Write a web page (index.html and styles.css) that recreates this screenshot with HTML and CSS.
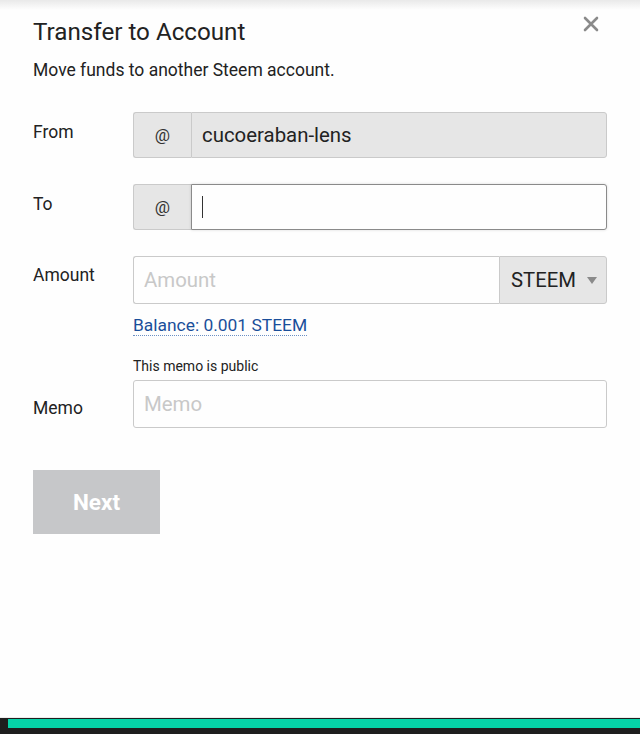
FILE: index.html
```html
<!DOCTYPE html>
<html>
<head>
<meta charset="utf-8">
<link rel="stylesheet" href="styles.css">
</head>
<body>
<div class="page">
  <div class="top-shade"></div>
  <div class="modal">
    <div class="header">
      <h1 class="title">Transfer to Account</h1>
      <button class="close" aria-label="Close">
        <svg width="16" height="16" viewBox="0 0 16 16"><path d="M2 2 L14 14 M14 2 L2 14" stroke="#8a8a8a" stroke-width="2.6" stroke-linecap="round"/></svg>
      </button>
    </div>
    <p class="subtitle">Move funds to another Steem account.</p>

    <div class="form">
      <div class="label">From</div>
      <div class="field">
        <div class="group">
          <span class="addon">@</span>
          <span class="input disabled">cucoeraban-lens</span>
        </div>
      </div>

      <div class="label">To</div>
      <div class="field">
        <div class="group">
          <span class="addon">@</span>
          <span class="input focused"><span class="caret"></span></span>
        </div>
      </div>

      <div class="label label-amount">Amount</div>
      <div class="field">
        <div class="group tall">
          <span class="input placeholder left">Amount</span>
          <span class="select">STEEM <span class="arrow"></span></span>
        </div>
        <a class="balance">Balance: 0.001 STEEM</a>
      </div>

      <div class="label label-memo">Memo</div>
      <div class="field">
        <div class="hint">This memo is public</div>
        <div class="group tall">
          <span class="input placeholder solo">Memo</span>
        </div>
      </div>
    </div>

    <button class="next">Next</button>
  </div>
  <div class="footer">
    <div class="footer-bar"></div>
  </div>
</div>
</body>
</html>
```

FILE: styles.css
```css
* { box-sizing: border-box; }
html, body { margin: 0; padding: 0; }
body {
  background: #fefefe;
  font-family: Roboto, "Liberation Sans", sans-serif;
  color: #222;
}
.page {
  position: relative;
  min-height: 734px;
  display: flex;
  flex-direction: column;
}
.top-shade {
  position: absolute;
  left: 0; right: 0; top: 0;
  height: 10px;
  background: linear-gradient(#e9e9e9, rgba(254,254,254,0));
}
.modal {
  padding: 18px 33px 0 33px;
  flex: 1;
}
.header {
  display: flex;
  justify-content: space-between;
  align-items: flex-start;
}
.title {
  margin: 0;
  font-size: 24.2px;
  line-height: 28px;
  font-weight: 400;
  color: #222;
}
.close {
  border: 0;
  background: none;
  padding: 0;
  margin: -2px 8px 0 0;
  width: 16px;
  height: 16px;
  display: flex;
}
.subtitle {
  margin: 14px 0 0 0;
  font-size: 17.5px;
  line-height: 20px;
  color: #222;
}
.form {
  margin-top: 32px;
  display: grid;
  grid-template-columns: 100px 1fr;
  row-gap: 26px;
}
.label {
  font-size: 17.5px;
  line-height: 20px;
  padding-top: 10px;
  color: #222;
}
.label-amount { padding-top: 9px; }
.label-memo { padding-top: 36px; }
.group {
  display: flex;
  height: 46px;
}
.group.tall { height: 48px; }
.addon {
  width: 58px;
  flex: none;
  display: flex;
  align-items: center;
  justify-content: center;
  background: #e6e6e6;
  border: 1px solid #cacaca;
  border-right: 0;
  border-radius: 3px 0 0 3px;
  font-size: 17px;
  color: #333;
}
.input {
  flex: 1;
  display: flex;
  align-items: center;
  padding: 0 10px;
  border: 1px solid #cacaca;
  border-radius: 0 3px 3px 0;
  font-size: 20.4px;
  color: #222;
  background: #fefefe;
}
.input.disabled { background: #e6e6e6; }
.input.focused {
  border-color: #8a8a8a;
  box-shadow: 0 0 3px rgba(0,0,0,0.15);
}
.caret {
  width: 1px;
  height: 22px;
  background: #333;
}
.input.placeholder { color: #c8c8c8; }
.input.left { border-radius: 3px 0 0 3px; border-right: 0; }
.input.solo { border-radius: 3px; }
.select {
  width: 108px;
  flex: none;
  display: flex;
  align-items: center;
  padding-left: 11px;
  gap: 11px;
  background: #e6e6e6;
  border: 1px solid #cacaca;
  border-radius: 0 3px 3px 0;
  font-size: 20.3px;
  color: #222;
}
.arrow {
  width: 0; height: 0;
  border-left: 5px solid transparent;
  border-right: 5px solid transparent;
  border-top: 7px solid #8a8a8a;
}
.balance {
  display: inline-block;
  margin-top: 11px;
  font-size: 17.4px;
  line-height: 20px;
  color: #1a4e9a;
  border-bottom: 1px dotted #6b8fc4;
}
.hint {
  font-size: 14px;
  line-height: 18px;
  margin-top: -5px;
  margin-bottom: 5px;
  color: #222;
}
.next {
  margin-top: 42px;
  width: 127px;
  height: 64px;
  border: 0;
  background: #c6c7c9;
  color: #fff;
  font-family: Roboto, "Liberation Sans", sans-serif;
  font-weight: 700;
  font-size: 22.5px;
  display: block;
}
.footer {
  height: 17px;
  border-top: 1px solid #ececec;
  background: #1e1e1e;
  padding: 1px 0 6px 8px;
}
.footer-bar {
  height: 9px;
  background: #05d3a8;
}
```
